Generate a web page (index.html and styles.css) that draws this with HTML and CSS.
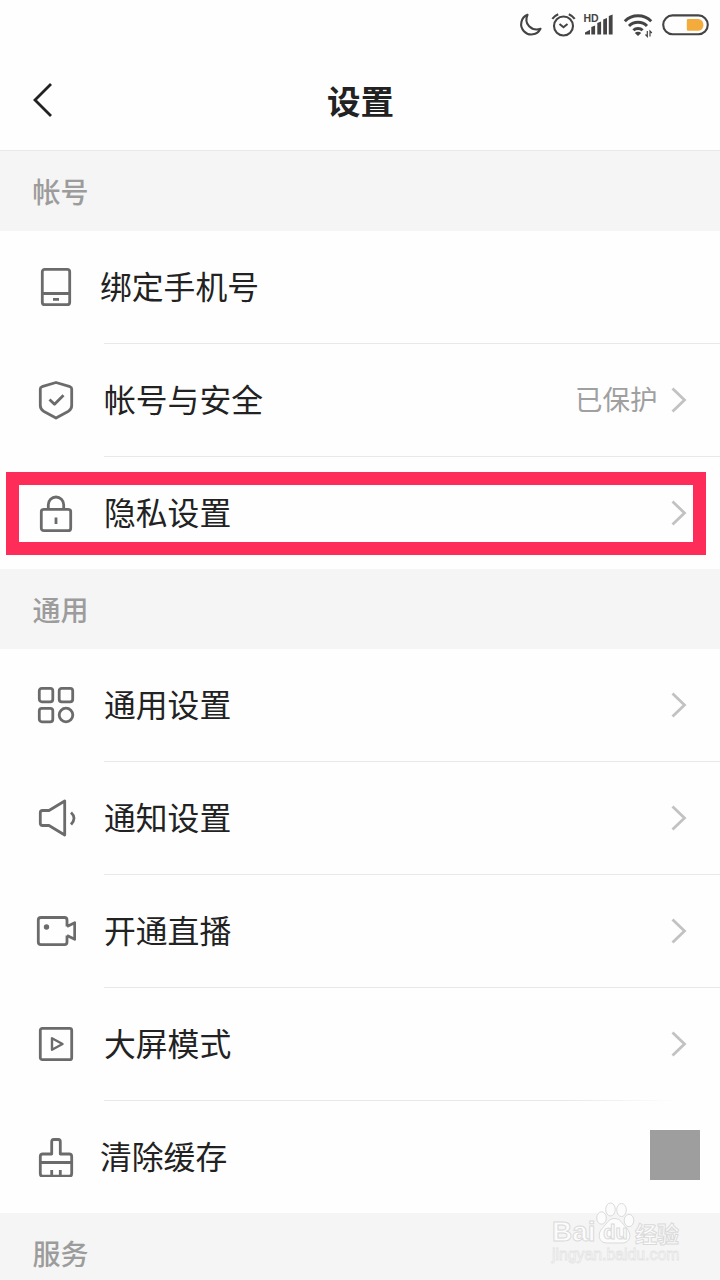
FILE: index.html
```html
<!DOCTYPE html>
<html lang="zh-CN">
<head>
    <meta charset="UTF-8">
    <meta name="viewport" content="width=device-width, initial-scale=1.0">
    <title>设置</title>
    <link rel="stylesheet" href="styles.css">
</head>
<body>
    <div class="status">
        <svg class="status-icons" viewBox="500 0 220 50" fill="none" stroke="#444" stroke-width="2.1">
            <path d="M527.5 14.8A10.2 10.2 0 1 0 540.5 28.8C531.5 31.5 523.5 24 527.5 14.8Z" stroke-linejoin="round"/>
            <circle cx="563.5" cy="26" r="9.5"/>
            <path d="M559.5 24l4 3.2 4-3.2M552.3 18.8a14 14 0 0 1 5.9-4.6M574.7 18.8a14 14 0 0 0-5.9-4.6"/>
            <text class="hd" x="583.5" y="21.5">HD</text>
            <path d="M585 34.500v-2l5-2.800v4.800ZM591.300 34.500v-7.500l3.800-1.600v9.100ZM597.300 34.500V23l3.800-1.600v13.100ZM603.200 34.500v-15l3.800-1.600v16.600ZM608.800 34.500V16l3.800-1.600v20.100Z" fill="#444" stroke="none"/>
            <path d="M624.8 21.3a18.7 18.7 0 0 1 26.4 0M629 26a12.7 12.7 0 0 1 18 0M633.4 30.3a6.5 6.5 0 0 1 9.2 0" stroke-width="3"/>
            <path d="M634.8 33a4.5 4.5 0 0 1 6.4 0l-3.2 3Z" fill="#444" stroke="none"/>
            <path d="M647.3 31v5.5l-1.8-2M650 36.5V31l1.8 2" stroke-width="1.2"/>
            <rect x="663.2" y="15.4" width="44.6" height="18.8" rx="9.4"/>
            <path d="M688 19h10.5a6 6 0 0 1 0 11.8H688a1.2 1.2 0 0 1-1.2-1.2v-9.4A1.2 1.2 0 0 1 688 19Z" fill="#f3ac3b" stroke="none"/>
        </svg>
    </div>
    <div class="navbar">
        <svg class="back" viewBox="0 0 24 36"><path d="M19 2L3 18l16 16"/></svg>
        <h1>设置</h1>
    </div>

    <h2 class="first">帐号</h2>
    <ul>
        <li>
            <svg class="icon" viewBox="0 0 40 40"><rect x="6.3" y="2.3" width="27.4" height="35.4" rx="2.5"/><path d="M6 26.5h28M17 32.3h6"/></svg>
            <div class="row shifted"><span class="name">绑定手机号</span></div>
        </li>
        <li>
            <svg class="icon" viewBox="0 0 40 40"><path d="M20 2.5l14 4.2Q35.7 7.3 35.7 9v16.5Q35.7 29 32.5 31.2L20 38 7.5 31.2Q4.3 29 4.3 25.5V9q0-1.7 1.7-2.3ZM13.5 19.5l5 4.8 9-9"/></svg>
            <div class="row"><span class="name">帐号与安全</span><span class="value">已保护</span><svg class="arrow" viewBox="0 0 16 26"><path d="M1.5 1.5L13.5 13l-12 11.5"/></svg></div>
        </li>
        <li>
            <svg class="icon" viewBox="0 0 40 40"><rect x="5.3" y="16.3" width="29.4" height="21.4" rx="2.5"/><path d="M12.3 16v-4.3a7.7 7.7 0 0 1 15.4 0V16M20 24.5v6.5"/></svg>
            <div class="row"><span class="name">隐私设置</span><svg class="arrow" viewBox="0 0 16 26"><path d="M1.5 1.5L13.5 13l-12 11.5"/></svg></div>
            <div class="highlight"></div>
        </li>
    </ul>

    <h2>通用</h2>
    <ul>
        <li>
            <svg class="icon" viewBox="0 0 40 40"><rect x="3.3" y="3.3" width="13.5" height="13.5" rx="2.5"/><rect x="23.2" y="3.3" width="13.5" height="13.5" rx="2.5"/><rect x="3.3" y="23.3" width="13.5" height="13.5" rx="2.5"/><circle cx="30" cy="30" r="6.8"/></svg>
            <div class="row"><span class="name">通用设置</span><svg class="arrow" viewBox="0 0 16 26"><path d="M1.5 1.5L13.5 13l-12 11.5"/></svg></div>
        </li>
        <li>
            <svg class="icon" viewBox="0 0 40 40"><path d="M28.7 3v34L13 27.5H6.5Q4.3 27.5 4.3 25.3v-10.6q0-2.2 2.2-2.2H13ZM35 14.5q6 5.5 0 12"/></svg>
            <div class="row"><span class="name">通知设置</span><svg class="arrow" viewBox="0 0 16 26"><path d="M1.5 1.5L13.5 13l-12 11.5"/></svg></div>
        </li>
        <li>
            <svg class="icon" viewBox="0 0 40 40"><path d="M31 15.5V9q0-2.5-2.5-2.5h-23.5Q2.3 6.5 2.3 9v22q0 2.7 2.7 2.7h23.5q2.5 0 2.5-2.7v-6.5M31 15.5l7.7-3.8v16.6L31 24.5"/><circle class="dot" cx="10.5" cy="16" r="2.7"/></svg>
            <div class="row"><span class="name">开通直播</span><svg class="arrow" viewBox="0 0 16 26"><path d="M1.5 1.5L13.5 13l-12 11.5"/></svg></div>
        </li>
        <li>
            <svg class="icon" viewBox="0 0 40 40"><rect x="4.3" y="4.3" width="31.4" height="31.4" rx="2"/><path class="thin" d="M16 14.2v11.6L26.5 20Z"/></svg>
            <div class="row"><span class="name">大屏模式</span><svg class="arrow" viewBox="0 0 16 26"><path d="M1.5 1.5L13.5 13l-12 11.5"/></svg></div>
        </li>
        <li>
            <svg class="icon" viewBox="0 0 40 40"><path d="M15.7 17V4.7q0-2.200 2-2.200h4.600q2 0 2 2.200V17h8.900q2.500 0 2.500 2.500v17q0 2.700-2.500 2.700H6.800q-2.500 0-2.500-2.700v-17q0-2.500 2.500-2.500ZM4.300 25.500h31.400M15.700 33v6M24.300 33v6"/></svg>
            <div class="row shifted"><span class="name">清除缓存</span><span class="block"></span></div>
        </li>
    </ul>

    <h2>服务</h2>

    <div class="watermark">
        <svg class="paw" viewBox="0 0 40 44">
            <ellipse cx="5.5" cy="16" rx="4.8" ry="6.2"/>
            <ellipse cx="14.5" cy="7.5" rx="4.800" ry="6.5"/>
            <ellipse cx="25.5" cy="8" rx="4.800" ry="6.5"/>
            <ellipse cx="33" cy="18.500" rx="4.8" ry="6.2"/>
            <path d="M18.500 16.500c6 0 7.500 5 12 9.500 6 6 3.500 15-4 15h-16c-7.500 0-10-9-4-15 4.500-4.500 6-9.500 12-9.500Z"/>
        </svg>
        <div class="brand"><span class="bai">Bai</span><span class="du">du</span><span class="jingyan">经验</span></div>
        <div class="site">jingyan.baidu.com</div>
    </div>
</body>
</html>
```
FILE: styles.css
```css
body {
	margin: 0;
	position: relative;
	height: 1280px;
	overflow: hidden;
	background: #fefefe;
	color: #222;
	font-family: "Noto Sans CJK SC", sans-serif;
}

svg {
	display: block;
	flex: none;
}

.status {
	display: flex;
	justify-content: flex-end;
	height: 50px;
}

.status-icons {
	width: 220px;
	height: 50px;
}

.hd {
	font: bold 10.5px "Liberation Sans", sans-serif;
	fill: #444;
	stroke: none;
}

.navbar {
	display: grid;
	grid-template-columns: 61px 1fr 60px;
	align-items: center;
	height: 100px;
}

.back {
	width: 24px;
	height: 36px;
	margin-left: 32px;
	fill: none;
	stroke: #222;
	stroke-width: 2.8;
}

h1 {
	margin: 0;
	padding-bottom: 1px;
	text-align: center;
	font-size: 33.5px;
	font-weight: 700;
	line-height: 48px;
}

h2 {
	box-sizing: border-box;
	height: 80px;
	margin: 0;
	padding-left: 32.5px;
	background: #f5f5f5;
	color: #9c9c9c;
	font-size: 28px;
	font-weight: 500;
	line-height: 80px;
}

h2.first {
	height: 81px;
	border-top: 1px solid #e8e8e8;
}

ul {
	margin: 0;
	padding: 0;
	list-style: none;
}

li {
	position: relative;
	display: flex;
	align-items: center;
	padding-left: 36px;
}

.icon {
	width: 40px;
	height: 40px;
	margin: 0 28px 1px 0;
	fill: none;
	stroke: #6b6b6b;
	stroke-width: 2.8;
	stroke-linejoin: round;
}

.icon .dot {
	fill: #6b6b6b;
	stroke: none;
}

.icon .thin {
	stroke-width: 2.4;
}

.row {
	flex: 1;
	display: flex;
	align-items: center;
	height: 112px;
	padding-right: 33.5px;
	border-bottom: 1px solid #e8e8e8;
}

li:last-child .row {
	border-bottom: none;
}

/* last divider fades out before the edge */
li:nth-child(4) .row {
	border-image: linear-gradient(to right, #e8e8e8 75%, #fefefe 93%) 1;
}

.name {
	flex: 1;
	padding-bottom: 4px;
	font-size: 31.8px;
	line-height: 48px;
}

.shifted .name {
	margin-left: -4px;
}

.value {
	margin-right: 13px;
	padding-bottom: 4px;
	color: #a0a0a0;
	font-size: 27.5px;
}

.arrow {
	width: 16px;
	height: 26px;
	fill: none;
	stroke: #c2c2c2;
	stroke-width: 2.8;
}

.block {
	width: 50px;
	height: 50px;
	margin: -4px -13.5px 0 0;
	background: #9e9e9e;
}

.highlight {
	position: absolute;
	left: 6px;
	top: 15px;
	width: 674px;
	height: 57px;
	border: 13px solid #fe2c58;
}

.watermark {
	position: absolute;
	left: 552px;
	top: 1202px;
	width: 132px;
	height: 64px;
	color: #fcfcfc;
	-webkit-text-stroke: 1px #dadada;
}

.paw {
	position: absolute;
	left: 44px;
	top: 0;
	width: 40px;
	height: 44px;
	fill: #fcfcfc;
	stroke: #dadada;
}

.brand {
	position: relative;
	display: flex;
	align-items: center;
	padding-top: 16px;
	height: 28px;
	font: bold 28px "Liberation Sans", "Noto Sans CJK SC", sans-serif;
}

.bai {
	width: 44px;
}

.du {
	width: 39px;
	text-align: center;
	font-size: 20px;
}

.jingyan {
	font-size: 22px;
}

.site {
	font: 15.8px/18px "Liberation Sans", sans-serif;
	-webkit-text-stroke: 0.8px #e4e4e4;
}
```
